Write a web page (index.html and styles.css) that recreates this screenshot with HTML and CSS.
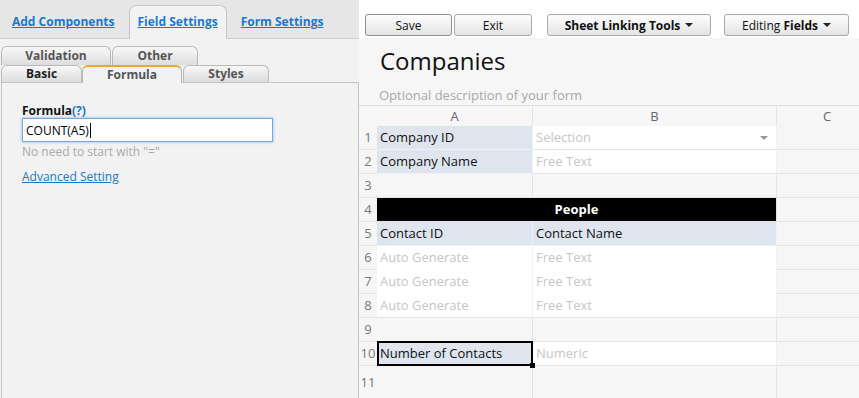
FILE: index.html
```html
<!DOCTYPE html>
<html>
<head>
<meta charset="utf-8">
<link rel="stylesheet" href="styles.css">
</head>
<body>
<div class="app">
  <aside class="left">
    <nav class="maintabs">
      <a class="mtab">Add Components</a>
      <a class="mtab active">Field Settings</a>
      <a class="mtab">Form Settings</a>
    </nav>
    <div class="subtabs">
      <div class="strow back">
        <span class="stab w-val">Validation</span>
        <span class="stab w-oth">Other</span>
      </div>
      <div class="strow front">
        <span class="stab w-basic dark">Basic</span>
        <span class="stab w-formula active">Formula</span>
        <span class="stab w-styles">Styles</span>
      </div>
    </div>
    <div class="panel">
      <div class="flabel">Formula<span class="help">(?)</span></div>
      <div class="finput">COUNT(A5)<span class="tcaret"></span></div>
      <div class="hint">No need to start with "="</div>
      <a class="adv">Advanced Setting</a>
    </div>
  </aside>
  <main class="right">
    <div class="toolbar">
      <button class="btn b-save">Save</button>
      <button class="btn b-exit">Exit</button>
      <button class="btn b-link"><b>Sheet Linking Tools</b><span class="dcaret"></span></button>
      <button class="btn b-edit">Editing&nbsp;<b>Fields</b><span class="dcaret"></span></button>
    </div>
    <div class="formhead">
      <h1 class="title">Companies</h1>
      <p class="desc">Optional description of your form</p>
    </div>
    <div class="sheet">
      <div class="rn hdr"></div><div class="c hdr colh">A</div><div class="c hdr colh">B</div><div class="c hdr colh last">C</div>

      <div class="rn">1</div><div class="c lbl">Company ID</div><div class="c wh ph sel">Selection<span class="arrow"></span></div><div class="c last"></div>
      <div class="rn">2</div><div class="c lbl">Company Name</div><div class="c wh ph">Free Text</div><div class="c last"></div>
      <div class="rn">3</div><div class="c"></div><div class="c"></div><div class="c last"></div>
      <div class="rn">4</div><div class="c section">People</div><div class="c last"></div>
      <div class="rn">5</div><div class="c lbl">Contact ID</div><div class="c lbl">Contact Name</div><div class="c last"></div>
      <div class="rn">6</div><div class="c wh ph soft">Auto Generate</div><div class="c wh ph soft">Free Text</div><div class="c last"></div>
      <div class="rn">7</div><div class="c wh ph soft">Auto Generate</div><div class="c wh ph soft">Free Text</div><div class="c last"></div>
      <div class="rn">8</div><div class="c wh ph">Auto Generate</div><div class="c wh ph">Free Text</div><div class="c last"></div>
      <div class="rn">9</div><div class="c"></div><div class="c"></div><div class="c last"></div>
      <div class="rn">10</div><div class="c lbl active">Number of Contacts</div><div class="c wh ph">Numeric</div><div class="c last"></div>
      <div class="rn">11</div><div class="c"></div><div class="c"></div><div class="c last"></div>
    </div>
  </main>
</div>
</body>
</html>
```
FILE: styles.css
```css
* { box-sizing: border-box; }
body {
  margin: 0;
  font-family: "Open Sans", "DejaVu Sans", sans-serif;
  color: #111;
}
.app {
  display: flex;
  width: 859px;
  height: 398px;
  overflow: hidden;
}

/* ---------- left panel ---------- */
.left {
  width: 359px;
  flex: none;
  display: flex;
  flex-direction: column;
  background: #f2f2f2;
}
.maintabs {
  height: 39px;
  background: #e6e6e6;
  border-bottom: 1px solid #cdcdcd;
  display: flex;
  align-items: flex-end;
  gap: 5px;
  padding-left: 3px;
}
.mtab {
  height: 34px;
  margin-bottom: -1px;
  padding: 0 8px 2px;
  display: flex;
  align-items: center;
  border: 1px solid transparent;
  border-bottom: none;
  font-size: 12px;
  font-weight: 700;
  color: #1a78d2;
  text-decoration: underline;
}
.mtab.active {
  background: #f2f2f2;
  border-color: #c6c6c6;
  border-radius: 7px 7px 0 0;
}
.subtabs {
  padding: 7px 0 0 1px;
}
.strow {
  display: flex;
}
.strow.back { height: 19px; gap: 1px; }
.strow.front { height: 17px; }
.stab {
  border: 1px solid #b9b9b9;
  border-bottom: none;
  border-radius: 6px 6px 0 0;
  background: linear-gradient(#f8f8f8, #dddddd);
  font-size: 12px;
  font-weight: 700;
  color: #555;
  display: flex;
  align-items: center;
  justify-content: center;
  line-height: 14px;
}
.back .stab { height: 19px; }
.front .stab { height: 17px; }
.stab.dark { color: #222; }
.w-val { width: 110px; }
.w-oth { width: 86px; }
.w-basic { width: 81px; }
.w-formula { width: 100px; }
.w-styles { width: 86px; margin-left: 1px; }
.stab.active {
  height: 18px;
  margin-bottom: -1px;
  position: relative;
  background: #f2f2f2;
  border-top: 2px solid #f5a623;
}
.panel {
  flex: 1;
  margin-left: 1px;
  border: 1px solid #c4c4c4;
  border-bottom: none;
  padding: 20px 0 0 20px;
}
.flabel {
  font-size: 12px;
  font-weight: 700;
  line-height: 16px;
  color: #111;
}
.help { color: #1a78d2; }
.finput {
  margin-top: -1px;
  width: 251px;
  height: 24px;
  border: 1px solid #7aa8dc;
  box-shadow: 0 0 3px #8cb8ea;
  background: #fff;
  font-size: 12px;
  padding-left: 3px;
  display: flex;
  align-items: center;
  color: #000;
}
.tcaret {
  width: 1px;
  height: 15px;
  background: #000;
  margin-left: 1px;
}
.hint {
  margin-top: 2px;
  font-size: 12px;
  line-height: 16px;
  color: #aaa;
}
.adv {
  display: inline-block;
  margin-top: 9px;
  font-size: 12px;
  line-height: 16px;
  color: #1a78d2;
  text-decoration: underline;
}

/* ---------- right panel ---------- */
.right {
  flex: 1;
  min-width: 0;
  background: #f6f6f6;
  display: flex;
  flex-direction: column;
  overflow: hidden;
}
.toolbar {
  height: 38px;
  flex: none;
  background: #fff;
  padding: 14px 0 0 6px;
  display: flex;
  align-items: flex-start;
}
.btn {
  height: 22px;
  border: 1px solid #a8a8a8;
  border-radius: 3px;
  background: linear-gradient(#fdfdfd, #e4e4e4);
  font-family: "Open Sans", "DejaVu Sans", sans-serif;
  font-size: 12px;
  color: #111;
  padding: 0;
  display: flex;
  align-items: center;
  justify-content: center;
}
.b-save { width: 87px; border-color: #8e8e8e; }
.b-exit { width: 78px; margin-left: 2px; }
.b-link { width: 164px; margin-left: 15px; }
.b-edit { width: 125px; margin-left: 13px; }
.dcaret {
  width: 0;
  height: 0;
  border-left: 4px solid transparent;
  border-right: 4px solid transparent;
  border-top: 4px solid #222;
  margin-left: 5px;
}
.formhead {
  padding-left: 20px;
}
.title {
  margin: 8px 0 0 1px;
  font-size: 24px;
  font-weight: 400;
  line-height: 30px;
  color: #111;
}
.desc {
  margin: 10px 0 0;
  font-size: 13px;
  line-height: 18px;
  color: #a8a8a8;
}
.sheet {
  margin-top: 1px;
  width: 518px;
  border-top: 1px solid #dcdcdc;
  display: grid;
  grid-template-columns: 18px 156px 244px 100px;
  grid-template-rows: 20px repeat(10, 24px) 34px;
  font-size: 13px;
}
.rn {
  border-bottom: 1px solid #e4e4e4;
  color: #777;
  display: flex;
  align-items: center;
  justify-content: center;
  font-size: 13px;
  padding-bottom: 1px;
}
.c {
  border-bottom: 1px solid #e4e4e4;
  border-right: 1px solid #e4e4e4;
  display: flex;
  align-items: center;
  padding: 0 0 1px 3px;
  white-space: nowrap;
  color: #111;
}
.c.last { border-right: none; }
.hdr { border-bottom: none; }
.colh {
  justify-content: center;
  padding-left: 0;
  color: #666;
}
.lbl { background: #dee5ee; border-bottom-color: #eef1f5; border-right-color: #eef1f5; }
.wh { background: #fff; }
.soft { border-bottom-color: #fff; border-right-color: #f6f6f6; }
.wh.ph { border-right-color: #f2f2f2; }
.ph { color: #c6c6c6; }
.sel {
  justify-content: space-between;
  padding-right: 8px;
}
.arrow {
  width: 0;
  height: 0;
  border-left: 4px solid transparent;
  border-right: 4px solid transparent;
  border-top: 4px solid #999;
  margin-top: 2px;
}
.section {
  grid-column: span 2;
  background: #000;
  color: #fff;
  font-weight: 700;
  justify-content: center;
  padding-left: 0;
}
.c.active {
  position: relative;
}
.c.active::after {
  content: "";
  position: absolute;
  left: 0;
  top: -1px;
  right: -1px;
  bottom: -1px;
  border: 2px solid #000;
}
.c.active::before {
  content: "";
  position: absolute;
  right: -3px;
  bottom: -3px;
  width: 5px;
  height: 5px;
  background: #000;
  z-index: 1;
}
```
